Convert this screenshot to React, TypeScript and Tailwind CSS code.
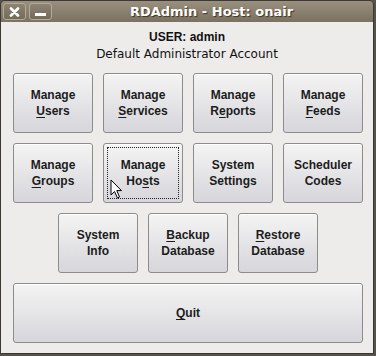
import React from 'react';

const btn =
  'flex flex-col items-center justify-center rounded-[3px] border border-[#8c8c8c] bg-gradient-to-b from-[#f4f4f4] to-[#d6d6db] text-[12px] font-bold leading-[16px] text-[#1c1c1c] shadow-[inset_0_1px_0_#ffffff]';

function Mn({ children }: { children: React.ReactNode }) {
  return <span className="underline decoration-1 underline-offset-[2px]">{children}</span>;
}

function Btn({ l1, l2, focus }: { l1: React.ReactNode; l2?: React.ReactNode; focus?: boolean }) {
  return (
    <button className={`${btn} h-[60px] w-[80px] p-[3px]`}>
      <div className={`flex h-full w-full flex-col items-center justify-center pb-[1px] ${focus ? 'border border-dotted border-[#222]' : 'border border-transparent'}`}>
        <span>{l1}</span>
        {l2 && <span>{l2}</span>}
      </div>
    </button>
  );
}

export default function App() {
  return (
    <div className="h-[356px] w-[376px] bg-[#55524c]" style={{ fontFamily: '"Liberation Sans", Arial, sans-serif' }}>
      <div className="relative flex h-[354px] w-[374px] flex-col overflow-hidden rounded-t-[5px] border border-[#3a3833]">
        {/* title bar */}
        <div className="flex h-[21px] items-center bg-gradient-to-b from-[#9a907f] to-[#7b7160] px-[2px]">
          <div className="flex gap-[3px]">
            <div className="flex h-[17px] w-[23px] items-center justify-center rounded-[3px] border border-[#b3aa9a] bg-gradient-to-b from-[#8e8474] to-[#746a5a]">
              <svg width="11" height="10" viewBox="0 0 11 10">
                <path d="M2 1.5 L9 8.5 M9 1.5 L2 8.5" stroke="#fff" strokeWidth="2.6" strokeLinecap="round" />
              </svg>
            </div>
            <div className="flex h-[17px] w-[23px] items-center justify-center rounded-[3px] border border-[#b3aa9a] bg-gradient-to-b from-[#8e8474] to-[#746a5a]">
              <div className="mt-[6px] h-[3px] w-[11px] bg-white" />
            </div>
          </div>
          <div
            className="flex-1 text-center text-[13px] font-bold text-white [text-shadow:1px_1px_1px_#3a342a]"
            style={{ fontFamily: '"DejaVu Sans", sans-serif' }}
          >
            RDAdmin - Host: onair
          </div>
        </div>

        {/* body */}
        <div className="flex flex-1 flex-col bg-[#edeceb] px-[12px] pt-[7px]">
          <div className="text-center text-[12px] font-bold leading-[17px] text-[#111]">USER: admin</div>
          <div className="text-center text-[12px] leading-[17px] text-[#111]" style={{ fontFamily: '"DejaVu Sans", sans-serif' }}>
            Default Administrator Account
          </div>

          <div className="mt-[10px] grid grid-cols-[repeat(4,80px)] gap-[10px]">
            <Btn l1="Manage" l2={<><Mn>U</Mn>sers</>} />
            <Btn l1="Manage" l2={<><Mn>S</Mn>ervices</>} />
            <Btn l1="Manage" l2={<>R<Mn>e</Mn>ports</>} />
            <Btn l1="Manage" l2={<><Mn>F</Mn>eeds</>} />
            <Btn l1="Manage" l2={<><Mn>G</Mn>roups</>} />
            <Btn l1="Manage" l2={<>Ho<Mn>s</Mn>ts</>} focus />
            <Btn l1="System" l2="Settings" />
            <Btn l1="Scheduler" l2="Codes" />
          </div>

          <div className="mt-[10px] flex gap-[10px] pl-[45px]">
            <Btn l1="System" l2="Info" />
            <Btn l1={<><Mn>B</Mn>ackup</>} l2="Database" />
            <Btn l1={<><Mn>R</Mn>estore</>} l2="Database" />
          </div>

          <button className={`${btn} mt-[10px] h-[60px] w-[350px]`}>
            <span>
              <Mn>Q</Mn>uit
            </span>
          </button>
        </div>

        {/* mouse pointer */}
        <svg className="absolute left-[109px] top-[178px]" width="13" height="20" viewBox="0 0 13 20">
          <path d="M1 1 L1 16 L4.5 12.5 L7.5 19 L9.5 18 L6.8 11.6 L11.5 11.6 Z" fill="#fff" stroke="#000" strokeWidth="1" strokeLinejoin="round" />
        </svg>
      </div>
    </div>
  );
}
